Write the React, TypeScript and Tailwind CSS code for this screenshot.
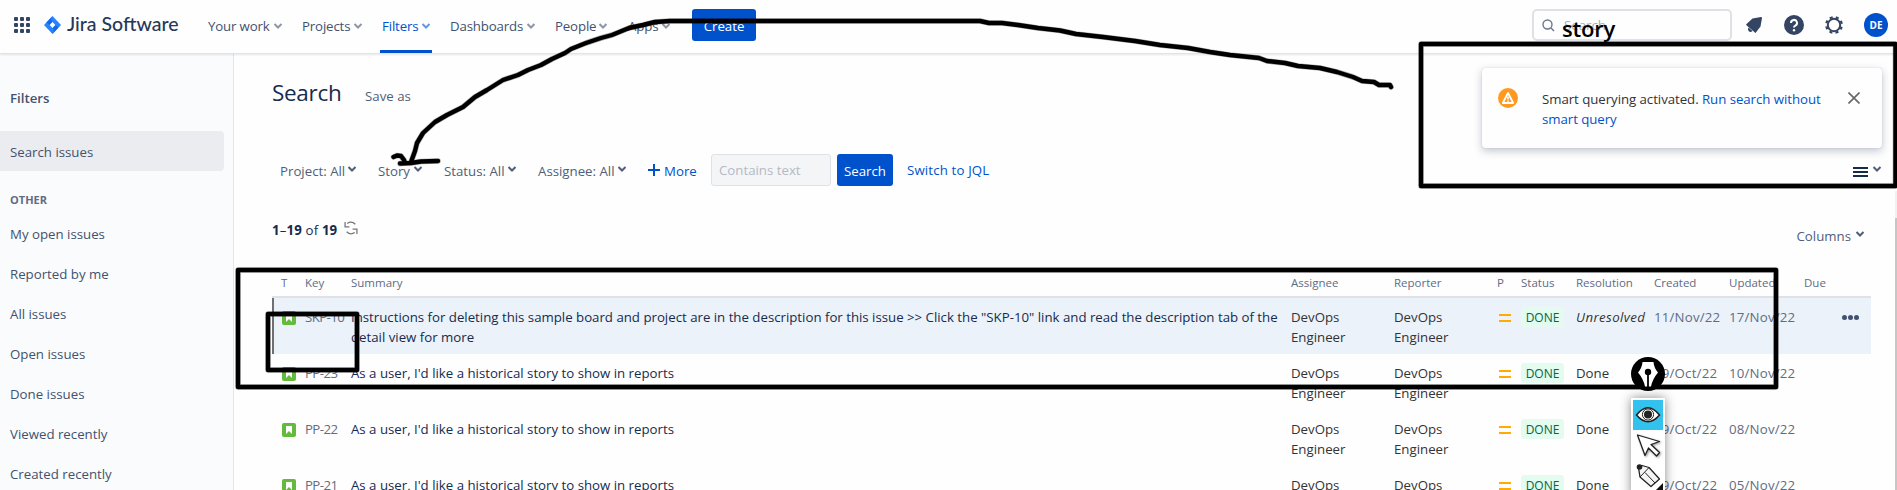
import React from "react";

const Chev = ({ cls = "" }: { cls?: string }) => (
  <svg width="10" height="8" viewBox="0 0 10 8" className={"shrink-0 " + cls} fill="none" stroke="currentColor" strokeWidth="2">
    <path d="M1.5 2 L5 5.5 L8.5 2" />
  </svg>
);

function NavItem({ t, width, active }: { t: string; width: string; active?: boolean }) {
  return (
    <div className={"relative flex h-[53px] shrink-0 items-center justify-between whitespace-nowrap pb-[2px] tracking-[-0.15px] " + width + (active ? " text-[#0052cc]" : " text-[#42526e]")}>
      <span>{t}</span>
      <Chev cls="opacity-60" />
      {active && <div className="absolute -left-[2px] -right-[1px] bottom-0 h-[3px] bg-[#0052cc]" />}
    </div>
  );
}

function Filter({ t, width }: { t: string; width: string }) {
  return (
    <div className={"flex shrink-0 items-center justify-between whitespace-nowrap pt-px text-[#505f79] " + width}>
      <span>{t}</span>
      <Chev cls="-mt-1" />
    </div>
  );
}

const rows = [
  { k: "SKP-10", s: 'Instructions for deleting this sample board and project are in the description for this issue >> Click the "SKP-10" link and read the description tab of the detail view for more', r: "Unresolved", c: "11/Nov/22", u: "17/Nov/22", hot: true },
  { k: "PP-23", s: "As a user, I'd like a historical story to show in reports", r: "Done", c: "19/Oct/22", u: "10/Nov/22" },
  { k: "PP-22", s: "As a user, I'd like a historical story to show in reports", r: "Done", c: "19/Oct/22", u: "08/Nov/22" },
  { k: "PP-21", s: "As a user, I'd like a historical story to show in reports", r: "Done", c: "19/Oct/22", u: "05/Nov/22" },
];

const cols = "grid shrink-0 grid-cols-[24px_46px_940px_103px_103px_24px_55px_78px_75px_75px_36px_1fr] pl-[9px]";

const arrowPath =
  "M1391 87 L1390 85 L1379 85 L1374 82 L1362 81 L1353 77 L1337 72 L1320 68 L1298 66 L1285 63 L1267 61 L1259 58 L1230 55 L1210 52 L1188 48 L1160 45 L1135 41 L1103 37 L1076 34 L1060 30.5 L1038 28 L1018 25 L1002 23 L989 23 L980 21 L670 21 L655 22 L643 25 L629 28 L612 35 L601 38 L586 43 L571 49 L565 53 L552 59 L541 65 L528 70 L518 75 L503 80 L487 90 L475 97 L463 107 L447 115 L435 122 L423 133 L417 143 L415 151 L411 162 M393.5 157 L397 155.5 L401 156 L404 160 L405 163 M400 163.5 L411 163 L421 161.5 L438 161";

function Ink() {
  const shapes = (
    <>
      <path d={arrowPath} />
      <rect x="1421" y="44" width="474.5" height="142" />
      <rect x="238" y="270" width="1538" height="117" />
      <rect x="268" y="314" width="89" height="56" />
    </>
  );
  return (
    <svg className="pointer-events-none absolute left-0 top-0 z-30" width="1897" height="490" viewBox="0 0 1897 490" fill="none" strokeLinejoin="round" strokeLinecap="round">
      <g stroke="#000" strokeOpacity="0.3" strokeWidth="5.6">{shapes}</g>
      <g stroke="#000" strokeWidth="4.4">{shapes}</g>
    </svg>
  );
}

function PenTools() {
  return (
    <div className="absolute left-[1631px] top-[357px] z-40 flex w-[34px] flex-col items-center">
      <svg width="34" height="34" viewBox="0 0 34 34">
        <circle cx="17" cy="17" r="17" fill="#000" />
        <path d="M11.5 5 H22.5 Q23 11 27 15.5 Q21.5 22 20 29.5 H14 Q12.5 22 7 15.5 Q11 11 11.5 5 Z" fill="#fff" />
        <circle cx="17" cy="15" r="3.2" fill="#000" />
        <path d="M17 15 V30" stroke="#000" strokeWidth="1.8" />
      </svg>
      <div className="mt-[7px] flex h-[100px] w-[34px] flex-col bg-white p-[2px] shadow-[0_0_10px_rgba(0,0,0,0.45)]">
        <div className="flex h-[30px] shrink-0 items-center justify-center bg-[#33c1ee]">
          <svg width="26" height="18" viewBox="0 0 26 18">
            <path d="M1.5 9 Q13 -5.5 24.5 9 Q13 22.5 1.5 9 Z" fill="#fff" stroke="#222" strokeWidth="1.6" />
            <circle cx="13" cy="8.5" r="5.6" fill="#fff" stroke="#222" strokeWidth="1" />
            <circle cx="13" cy="8.5" r="4" fill="#222" />
          </svg>
        </div>
        <svg className="shrink-0 drop-shadow-[1px_1px_1px_rgba(0,0,0,0.4)]" width="30" height="30" viewBox="0 0 30 30">
          <path d="M4.5 5 L26.5 11.5 L18 14.5 L26.5 22.5 L23.5 26 L15.5 18 L12 25.5 Z" fill="#fff" stroke="#222" strokeWidth="1.3" strokeLinejoin="round" />
        </svg>
        <svg className="shrink-0" width="30" height="30" viewBox="0 0 30 30">
          <path d="M5.5 8 L7 17 L18 26.5 L26.5 19 L16 7.5 L9 5.5 Z" fill="#f4f4f4" stroke="#222" strokeWidth="1.3" strokeLinejoin="round" />
          <path d="M7 17 L16 7.5 M12 12.5 L22 23" fill="none" stroke="#222" strokeWidth="1" />
          <circle cx="6.5" cy="7" r="2.8" fill="#222" />
          <path d="M30 23 V30 H23 Z" fill="#111" />
        </svg>
      </div>
    </div>
  );
}

export default function App() {
  return (
    <div className="relative flex h-[490px] w-[1897px] flex-col overflow-hidden bg-[#fefefe] font-['Open_Sans','Noto_Sans',sans-serif] text-[13.25px] leading-5 text-[#172b4d]">
      <header className="relative z-10 flex h-[54px] shrink-0 items-start border-b border-[#dfe3ea] shadow-[0_1px_2px_rgba(9,30,66,0.1)]">
        <div className="grid grid-cols-3 gap-[2px] pl-[14px] pt-[17px]">
          {Array.from({ length: 9 }, (_, i) => (
            <span key={i} className="size-1 rounded-[1px] bg-[#344563]" />
          ))}
        </div>
        <svg className="ml-[14px] mt-4 shrink-0" width="17" height="18" viewBox="0 0 17 18">
          <path d="M8.5 0 L17 9 L8.5 18 L0 9 Z" fill="#2684ff" />
          <path d="M8.5 0 Q6 3 8.5 6 L5.5 9 L2.5 6.4 Z M8.5 18 Q11 15 8.5 12 L11.5 9 L14.5 11.6 Z" fill="#1668e8" />
          <path d="M8.5 6 L11.3 9 L8.5 12 L5.7 9 Z" fill="#fff" />
        </svg>
        <span className="ml-[6px] mt-[11px] w-[112px] whitespace-nowrap font-['Lato'] text-[19.5px] font-medium leading-[26px] text-[#253858]">Jira Software</span>
        <div className="ml-[29px] flex">
          <NavItem t="Your work" width="w-[75px] mr-[19px]" />
          <NavItem t="Projects" width="w-[61px] mr-[19px]" />
          <NavItem t="Filters" width="w-[49px] mr-[19px]" active />
          <NavItem t="Dashboards" width="w-[86px] mr-[19px]" />
          <NavItem t="People" width="w-[53px] mr-[20px]" />
          <NavItem t="Apps" width="w-[43px] mr-[21px]" />
        </div>
        <div className="mt-[9px] flex h-8 w-16 items-center justify-center rounded-[3px] bg-[#0052cc] pt-[2px] text-white">Create</div>
        <div className="ml-auto mr-[14px] mt-[9px] flex h-8 w-[200px] items-center rounded-[5px] border-2 border-[#dfe1e6] pl-2 text-[#a5adba]">
          <svg width="13" height="13" viewBox="0 0 13 13" fill="none" stroke="#6b778c" strokeWidth="1.4"><circle cx="5.5" cy="5.5" r="4.5" /><path d="M9 9 L12 12" /></svg>
          <span className="ml-[9px]">Search</span>
        </div>
        <svg className="mr-[22px] mt-[17px]" width="16" height="16" viewBox="0 0 16 16" fill="#344563"><path d="M0 7.5 L6.5 1.5 L15 0 Q16 0 16 1 L14.5 9.5 L9.5 16 L1 8.8 Z M2.5 10.5 L6.5 14 Q4.5 15.8 2.8 14.2 Q1.2 12.5 2.5 10.5 Z" /></svg>
        <svg className="mr-[21px] mt-[15px]" width="20" height="20" viewBox="0 0 20 20"><circle cx="10" cy="10" r="10" fill="#344563" /><path d="M7 8 A3 3 0 1 1 11.3 10.6 Q10 11.2 10 12.5" fill="none" stroke="#fff" strokeWidth="2" /><circle cx="10" cy="15.2" r="1.2" fill="#fff" /></svg>
        <svg className="mr-[21px] mt-4" width="18" height="18" viewBox="0 0 18 18"><circle cx="9" cy="9" r="6.2" fill="none" stroke="#344563" strokeWidth="2" /><circle cx="9" cy="9" r="7.8" fill="none" stroke="#344563" strokeWidth="2.2" strokeDasharray="3.1 3.026" strokeDashoffset="1.55" transform="rotate(22.5 9 9)" /></svg>
        <div className="mr-[9px] mt-[13px] flex size-6 items-center justify-center rounded-full bg-[#0052cc] text-[10px] font-bold text-white">DE</div>
      </header>

      <div className="flex min-h-0 flex-1">
        <aside className="w-[234px] shrink-0 border-r border-[#e2e5ea] bg-[#fafbfc] text-[#42526e]">
          <div className="pl-[10px] pt-[34px] font-semibold">Filters</div>
          <div className="mt-[23px] flex h-10 w-56 items-center rounded-r-[4px] bg-[#ebecf0] pl-[10px] pt-[2px]">Search issues</div>
          <div className="pl-[10px] pt-[19px] text-[11px] font-bold text-[#5e6c84]">OTHER</div>
          <div className="pl-[10px] pt-[4px]">
            {["My open issues", "Reported by me", "All issues", "Open issues", "Done issues", "Viewed recently", "Created recently"].map((t) => (
              <div key={t} className="flex h-10 items-center">{t}</div>
            ))}
          </div>
        </aside>

        <main className="flex flex-1 flex-col pl-[38px] pr-[26px]">
          <div className="flex h-[53px] shrink-0 items-baseline pt-[25px]">
            <h1 className="w-[93px] text-[22.5px] leading-7 tracking-[-0.3px]">Search</h1>
            <span className="text-[#505f79]">Save as</span>
          </div>
          <div className="mt-[47px] flex h-8 shrink-0 items-center pl-2">
            <Filter t="Project: All" width="w-[77px] mr-[21px]" />
            <Filter t="Story" width="w-[45px] mr-[21px]" />
            <Filter t="Status: All" width="w-[73px] mr-[21px]" />
            <Filter t="Assignee: All" width="w-[89px] mr-[21px]" />
            <svg width="12" height="12" viewBox="0 0 12 12" stroke="#0052cc" strokeWidth="2"><path d="M0 6 H12 M6 0 V12" /></svg>
            <span className="ml-1 w-[47px] pt-px text-[#0052cc]">More</span>
            <div className="flex h-8 w-[120px] items-center rounded-[3px] border border-[#dfe1e6] bg-[#f4f5f7] pl-[7px] text-[#b3bac5]">Contains text</div>
            <div className="ml-[6px] flex h-8 w-14 items-center justify-center rounded-[3px] bg-[#0052cc] pt-px text-white">Search</div>
            <span className="ml-[14px] tracking-[0.15px] text-[#0052cc]">Switch to JQL</span>
            <svg className="ml-auto mt-[3px]" width="15" height="10" viewBox="0 0 15 10" fill="#172b4d"><path d="M0 0H15V2H0Z M0 4H15V6H0Z M0 8H15V10H0Z" /></svg>
            <Chev cls="ml-[4px] -mt-[2px] mr-[-11px] text-[#505f79]" />
          </div>
          <div className="flex h-[81px] shrink-0 pt-[34px]">
            <span className="tracking-[0.15px]"><b>1</b>–<b>19</b> of <b>19</b></span>
            <svg className="ml-[7px] mt-[1px]" width="14" height="14" viewBox="0 0 13 13" fill="none" stroke="#777" strokeWidth="1.2"><path d="M3 2.3 Q7 -.4 10.5 3 M1 1 V5.5 H5 M10 10.7 Q6 13.4 2.5 10 M12 12 V7.5 H8" /></svg>
            <span className="ml-auto mt-[6px] text-[#505f79]">Columns</span>
            <Chev cls="ml-1 mt-[10px] mr-[6px] text-[#505f79]" />
          </div>
          <div className={cols + " h-[31px] items-center border-b-2 border-[#dfe1e6] text-[11.5px] text-[#5e6c84]"}>
            {["T", "Key", "Summary", "Assignee", "Reporter", "P", "Status", "Resolution", "Created", "Updated", "Due"].map((t) => <span key={t} className="pt-[3px]">{t}</span>)}
          </div>
          {rows.map((r) => (
            <div key={r.k} className={cols + " h-14 pt-[9px] " + (r.hot ? "bg-[#ebf2f9] shadow-[inset_2px_0_#707070]" : "")}>
              <svg className="ml-px mt-[4px]" width="14" height="14" viewBox="0 0 14 14"><rect width="14" height="14" rx="2" fill="#63ba3c" /><path d="M4 3H10V11L7 8L4 11Z" fill="#fff" /></svg>
              <span className="tracking-[-0.6px] text-[#5e6c84]">{r.k}</span>
              <span className="pr-2 tracking-[-0.008px]">{r.s}</span>
              <span className="pr-8 text-[#333]">DevOps Engineer</span>
              <span className="pr-8 text-[#333]">DevOps Engineer</span>
              <span className="ml-[2px] mt-[7px] flex h-2 w-3 flex-col justify-between"><i className="h-[2px] bg-[#ffab00]" /><i className="h-[2px] bg-[#ffab00]" /></span>
              <span className="flex h-5 w-[43px] items-center justify-center rounded-[3px] bg-[#e3fcef] pt-px text-[12px] font-medium text-[#006644]">DONE</span>
              <span className={r.hot ? "italic tracking-[0.4px] text-[#333]" : "text-[#333]"}>{r.r}</span>
              <span className="tracking-[0.2px] text-[#5e6c84]">{r.c}</span>
              <span className="tracking-[0.2px] text-[#5e6c84]">{r.u}</span>
              <span />
              {r.hot && <span className="ml-[2px] mt-[8px] flex gap-px"><i className="size-[5px] rounded-full bg-[#42526e]" /><i className="size-[5px] rounded-full bg-[#42526e]" /><i className="size-[5px] rounded-full bg-[#42526e]" /></span>}
            </div>
          ))}
        </main>
      </div>

      <div className="absolute right-0 top-[191px] h-[299px] w-[2px] bg-[#f1f1f1] pt-[27px]">
        <div className="h-full bg-[#c6c6c6]" />
      </div>

      <div className="absolute left-[1482px] top-[68px] z-20 flex h-20 w-[400px] items-start rounded-[3px] bg-[#fefefe] pl-4 pt-5 shadow-[0_3px_8px_rgba(9,30,66,0.25),0_0_1px_rgba(9,30,66,0.3)]">
        <svg className="shrink-0" width="20" height="20" viewBox="0 0 20 20"><circle cx="10" cy="10" r="10" fill="#ff991f" /><path d="M10 5 L15.2 15 H4.8 Z" fill="none" stroke="#fff" strokeWidth="1.8" strokeLinejoin="round" /><path d="M10 8.5 V11.5 M10 12.5 V14" stroke="#fff" strokeWidth="1.6" /></svg>
        <p className="ml-6 mt-px w-[290px] tracking-[-0.05px] text-[#333]">Smart querying activated. <span className="text-[#0052cc]">Run search without smart query</span></p>
        <svg className="ml-4 mt-1 shrink-0" width="12" height="12" viewBox="0 0 12 12" stroke="#666" strokeWidth="1.6"><path d="M.5 .5 L11.5 11.5 M11.5 .5 L.5 11.5" /></svg>
      </div>

      <div className="absolute left-[1562px] top-[13px] z-30 text-[22px] font-semibold leading-[30px] tracking-[-0.2px] text-black">story</div>
      <Ink />
      <PenTools />
    </div>
  );
}
